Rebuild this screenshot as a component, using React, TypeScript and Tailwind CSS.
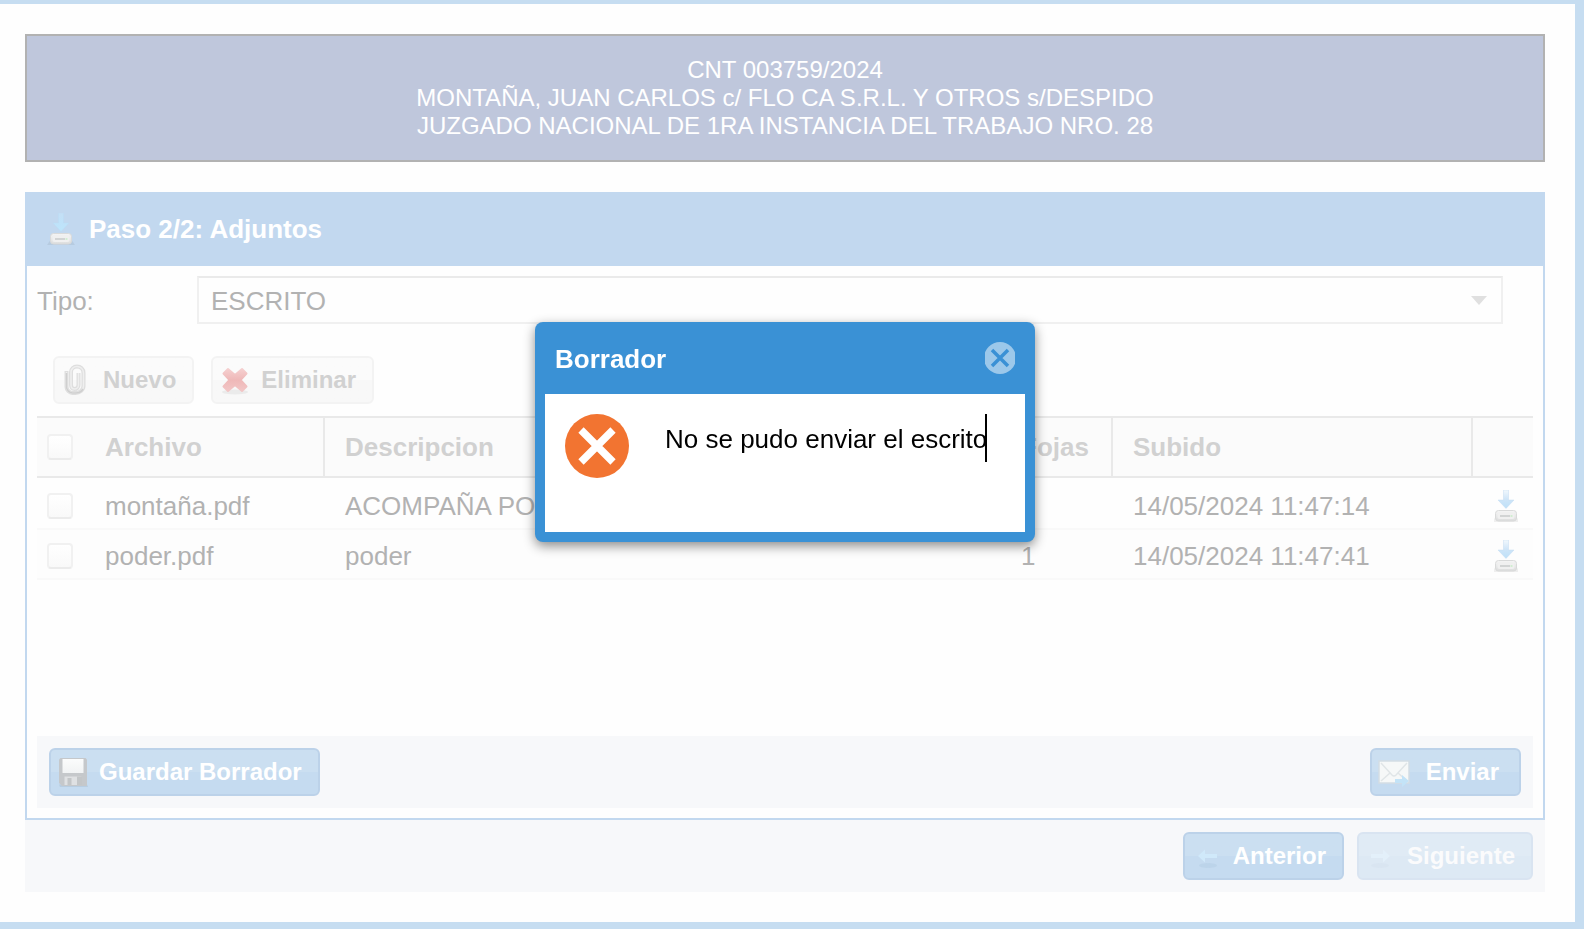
import type { ReactNode } from 'react';

const files = [
  { name: 'montaña.pdf', desc: 'ACOMPAÑA PODER', pages: 1, date: '14/05/2024 11:47:14' },
  { name: 'poder.pdf', desc: 'poder', pages: 1, date: '14/05/2024 11:47:41' },
];

function DriveIcon({ id, onBlue = false, className }: { id: string; onBlue?: boolean; className: string }) {
  return (
    <svg viewBox={onBlue ? '0 0 32 32' : '4 0 24 32'} className={className} aria-hidden="true">
      <defs>
        <linearGradient id={`${id}-arrow`} x1="0" y1="0" x2="0" y2="1">
          <stop offset="0" stopColor={onBlue ? '#c4dff5' : '#f2f8fd'} />
          <stop offset=".5" stopColor={onBlue ? '#bfe2f9' : '#cfe5f8'} />
          <stop offset="1" stopColor={onBlue ? '#bde5fb' : '#bde0f8'} />
        </linearGradient>
        <linearGradient id={`${id}-drive`} x1="0" y1="0" x2="0" y2="1">
          <stop offset="0" stopColor="#f5f5f5" />
          <stop offset="1" stopColor="#dcdddd" />
        </linearGradient>
      </defs>
      <path d="M2 32 6 26h20l4 6z" fill="#000" opacity=".06" />
      <path d="M13.500 0h5v10H24l-8 8.500L8 10h5.500z" fill={`url(#${id}-arrow)`} stroke={onBlue ? '#b9dcf5' : '#c4dcf2'} strokeWidth=".8" strokeOpacity=".6" strokeLinejoin="round" />
      <rect x="5.500" y="20.500" width="21" height="10.500" rx="3" fill={`url(#${id}-drive)`} stroke="#d9dada" />
      <rect x="7.500" y="22.500" width="17" height="6.500" rx="2" fill="#f0f0f0" />
      <path d="M10 26h10" stroke="#cfd1d1" strokeWidth="1.800" />
      <path d="M20.500 26h2" stroke="#cdeccd" strokeWidth="1.800" />
    </svg>
  );
}

function ClipIcon() {
  return (
    <svg viewBox="0 0 32 32" className="size-8" fill="none" aria-hidden="true">
      <path d="M7.500 7v16c0 3 3 6 6 6h3c4 0 8-3 8-7V9c0-4-3-6.500-6.500-6.500S12 5 12 8v13c0 2.500 1.500 4 3.500 4s4-1.500 4-4V9" stroke="#dedede" strokeWidth="4" />
      <path d="M7.500 8v15c0 3 3 6 6 6h3c4 0 8-3 8-7V9c0-4-3-6.500-6.500-6.500S12 5 12 8v13c0 2.500 1.500 4 3.500 4s4-1.500 4-4V9" stroke="#efefef" strokeWidth="1.500" />
      <path d="M7.500 9v14c0 3 3 6 6 6h3c3 0 6-1.500 7.500-4" stroke="#cfcfcf" strokeWidth="1.500" />
    </svg>
  );
}

function DeleteIcon() {
  return (
    <svg viewBox="0 0 32 32" className="size-8" aria-hidden="true">
      <defs>
        <linearGradient id="cross" x1="0" y1="0" x2="0" y2="1">
          <stop offset="0" stopColor="#f5cfcf" />
          <stop offset=".5" stopColor="#efb8b8" />
          <stop offset="1" stopColor="#f2c6c6" />
        </linearGradient>
      </defs>
      <ellipse cx="18" cy="28" rx="13" ry="2.500" fill="#000" opacity=".05" />
      <path d="m11 5 7 6 7-6 4.500 4.500-6 6.500 6 6.500L25 27l-7-6-7 6-4.500-4.500 6-6.500-6-6.500z" fill="url(#cross)" stroke="url(#cross)" strokeWidth="2" strokeLinejoin="round" />
    </svg>
  );
}

function FloppyIcon() {
  return (
    <svg viewBox="0 0 32 32" className="size-8" aria-hidden="true">
      <defs>
        <linearGradient id="label" x1="0" y1="0" x2="0" y2="1">
          <stop offset="0" stopColor="#fbfcfc" />
          <stop offset="1" stopColor="#f1f3f4" />
        </linearGradient>
      </defs>
      <path d="M2 28.500h28l1 2.500H3z" fill="#8fa3b5" opacity=".25" />
      <path d="M3.500 2h25L30 3.500V30H5l-3-3V3.500z" fill="#c5c8cb" />
      <path d="M5.500 3h21v14h-21z" fill="url(#label)" />
      <path d="M7.500 20.500h17V29h-17z" fill="#dfe1e3" />
      <path d="M10.500 22h4v7h-4zM20 20.500h5V29h-5z" fill="#c3c6c8" />
    </svg>
  );
}

function MailIcon() {
  return (
    <svg viewBox="0 0 32 32" className="size-8" fill="none" aria-hidden="true">
      <path d="M1 5h30v22H1z" fill="#f6f8f8" stroke="#d3dde3" strokeWidth="1.500" />
      <path d="m3 7 11 12q2 2 4 0L29 7M3 25l9-8M29 25l-9-8" stroke="#e0e5e7" strokeWidth="1.500" />
      <path d="M17 23h7v-4l7 6-7 6v-4h-7z" fill="#c3e3f7" />
    </svg>
  );
}

function ArrowIcon({ flip = false }: { flip?: boolean }) {
  return (
    <svg viewBox="0 0 32 32" className={flip ? 'size-8 -scale-x-100' : 'size-8'} aria-hidden="true">
      <ellipse cx="17" cy="25.500" rx="9" ry="2.500" fill="#8fb0cc" opacity=".15" />
      <path d="m7 16 7-6.500v4.500h12v4H14v4.500z" fill="#d0e9fa" />
    </svg>
  );
}

function BlueButton({ icon, children, disabled = false, wide = false }: { icon: ReactNode; children: ReactNode; disabled?: boolean; wide?: boolean }) {
  return (
    <button
      type="button"
      disabled={disabled}
      className={`flex h-12 items-center rounded-md border-2 border-[#bcd2e9] bg-linear-to-b from-[#cbdff1] from-50% to-[#c5dbf0] to-50% pl-1.5 text-2xl font-bold text-white ${wide ? 'gap-4 pr-5' : 'gap-2.5 pr-4'} ${disabled ? 'opacity-50' : ''}`}
    >
      {icon}
      <span>{children}</span>
    </button>
  );
}

function ToolButton({ icon, children }: { icon: ReactNode; children: ReactNode }) {
  return (
    <button
      type="button"
      className="flex h-12 items-center gap-3 rounded-md border-2 border-[#f3f3f3] bg-linear-to-b from-[#fbfbfb] from-50% to-[#f8f8f8] to-50% pr-4 pl-1 text-2xl font-bold text-[#d1d1d1]"
    >
      {icon}
      <span>{children}</span>
    </button>
  );
}

function Check({ label }: { label: string }) {
  return (
    <input
      type="checkbox"
      aria-label={label}
      className="block size-[26px] appearance-none rounded-sm border-2 border-[#f1f1f1] border-b-[#ebebeb] bg-linear-to-b from-white to-[#f9f9f9]"
    />
  );
}

export default function App() {
  return (
    <div className="flex min-h-screen flex-col border-t-4 border-r-[9px] border-b-[7px] border-[#c6ddf1] bg-[#fefefe] pt-[30px] pr-[30px] pb-[30px] pl-[25px] font-['Liberation_Sans',Arial,sans-serif]">
      <header className="mb-[30px] border-2 border-[#b2b2b2] bg-[#bfc7dc] pt-5 pb-5 text-center text-2xl leading-7 text-white">
        <p>CNT 003759/2024</p>
        <p>MONTAÑA, JUAN CARLOS c/ FLO CA S.R.L. Y OTROS s/DESPIDO</p>
        <p>JUZGADO NACIONAL DE 1RA INSTANCIA DEL TRABAJO NRO. 28</p>
      </header>

      <main className="flex grow flex-col">
        <h1 className="flex h-[74px] items-center gap-3 bg-[#c2d8ef] pl-5 text-[26px] font-bold text-white">
          <DriveIcon id="title" className="size-8" onBlue />
          Paso 2/2: Adjuntos
        </h1>

        <section className="flex grow flex-col border-2 border-t-0 border-[#c2d8ef] p-2.5 text-[26px] text-[#b2b2b2]">
          <div className="flex items-center pr-[30px]">
            <label htmlFor="tipo" className="w-40 pt-0.5">Tipo:</label>
            <div className="relative grow">
              <select id="tipo" className="block h-12 w-full appearance-none border-2 border-[#f0f0f0] border-t-[#eaeaea] bg-transparent px-3 pt-0.5">
                <option>ESCRITO</option>
              </select>
              <svg viewBox="0 0 16 9" className="pointer-events-none absolute top-5 right-4 h-[9px] w-4" aria-hidden="true">
                <path d="M0 0h16L8 9z" fill="#e0e0e0" />
              </svg>
            </div>
          </div>

          <div className="mt-8 mb-3 flex gap-[17px] pl-4">
            <ToolButton icon={<ClipIcon />}>Nuevo</ToolButton>
            <ToolButton icon={<DeleteIcon />}>Eliminar</ToolButton>
          </div>

          <table className="w-full table-fixed border-separate border-spacing-0 text-left">
            <colgroup>
              <col className="w-12" />
              <col className="w-60" />
              <col />
              <col className="w-28" />
              <col className="w-[360px]" />
              <col className="w-[60px]" />
            </colgroup>
            <thead>
              <tr className="h-[62px] bg-[#fbfbfb] text-[#d1d1d1] *:border-y-2 *:border-[#e9e9e9]">
                <th className="pl-2.5"><Check label="Seleccionar todos" /></th>
                <th className="border-r-2 pl-5">Archivo</th>
                <th className="border-r-2 pl-5">Descripcion</th>
                <th className="border-r-2 pl-5">Fojas</th>
                <th className="border-r-2 pl-5">Subido</th>
                <th aria-label="Descargar" />
              </tr>
            </thead>
            <tbody>
              {files.map((f) => (
                <tr key={f.name} className="*:h-[50px] *:border-b-2 *:border-[#f9f9f9] *:pt-1 first:*:h-[52px] first:*:pt-1.5 even:bg-[#fdfdfd]">
                  <td className="pl-2.5"><Check label={f.name} /></td>
                  <td className="pl-5">{f.name}</td>
                  <td className="truncate pl-5">{f.desc}</td>
                  <td className="pl-5">{f.pages}</td>
                  <td className="pl-5">{f.date}</td>
                  <td className="pl-[21px]">
                    <button type="button" aria-label={`Descargar ${f.name}`} className="block">
                      <DriveIcon id="row" className="h-8 w-6" />
                    </button>
                  </td>
                </tr>
              ))}
            </tbody>
          </table>

          <div className="mt-auto flex justify-between bg-[#f7f8fa] p-3">
            <BlueButton icon={<FloppyIcon />}>Guardar Borrador</BlueButton>
            <BlueButton icon={<MailIcon />} wide>Enviar</BlueButton>
          </div>
        </section>

        <footer className="flex justify-end gap-[13px] bg-[#f7f8fa] p-3">
          <BlueButton icon={<ArrowIcon />}>Anterior</BlueButton>
          <BlueButton icon={<ArrowIcon flip />} disabled>Siguiente</BlueButton>
        </footer>
      </main>

      <div className="pointer-events-none fixed inset-0 flex items-center justify-center pr-3.5 pb-[65px]">
        <div role="alertdialog" aria-labelledby="dialog-title" className="pointer-events-auto w-[500px] rounded-lg bg-[#3a91d5] px-2.5 pb-2.5 shadow-[0_4px_12px_rgba(0,0,0,0.45)]">
          <div className="flex h-[72px] items-center justify-between px-2.5 text-white">
            <h2 id="dialog-title" className="pt-0.5 text-[26px] font-bold">Borrador</h2>
            <button type="button" aria-label="Cerrar">
              <svg viewBox="1 0 30 32" className="h-8 w-[30px]" aria-hidden="true">
                <circle cx="16" cy="16" r="16" fill="#9cc8ea" />
                <path d="m8 8 16 16M24 8 8 24" stroke="#3a91d5" strokeWidth="3.500" />
              </svg>
            </button>
          </div>
          <div className="flex h-[138px] items-start gap-9 bg-white p-5 text-[26px] text-black">
            <svg viewBox="0 0 64 64" className="size-16 shrink-0" aria-hidden="true">
              <circle cx="32" cy="32" r="32" fill="#f27431" />
              <path d="m16 16 32 32M48 16 16 48" stroke="#fff" strokeWidth="7.500" />
            </svg>
            <p className="relative h-12 leading-[50px] whitespace-nowrap">
              No se pudo enviar el escrito
              <span className="absolute top-0 right-0 h-12 w-0.5 bg-black" />
            </p>
          </div>
        </div>
      </div>
    </div>
  );
}
